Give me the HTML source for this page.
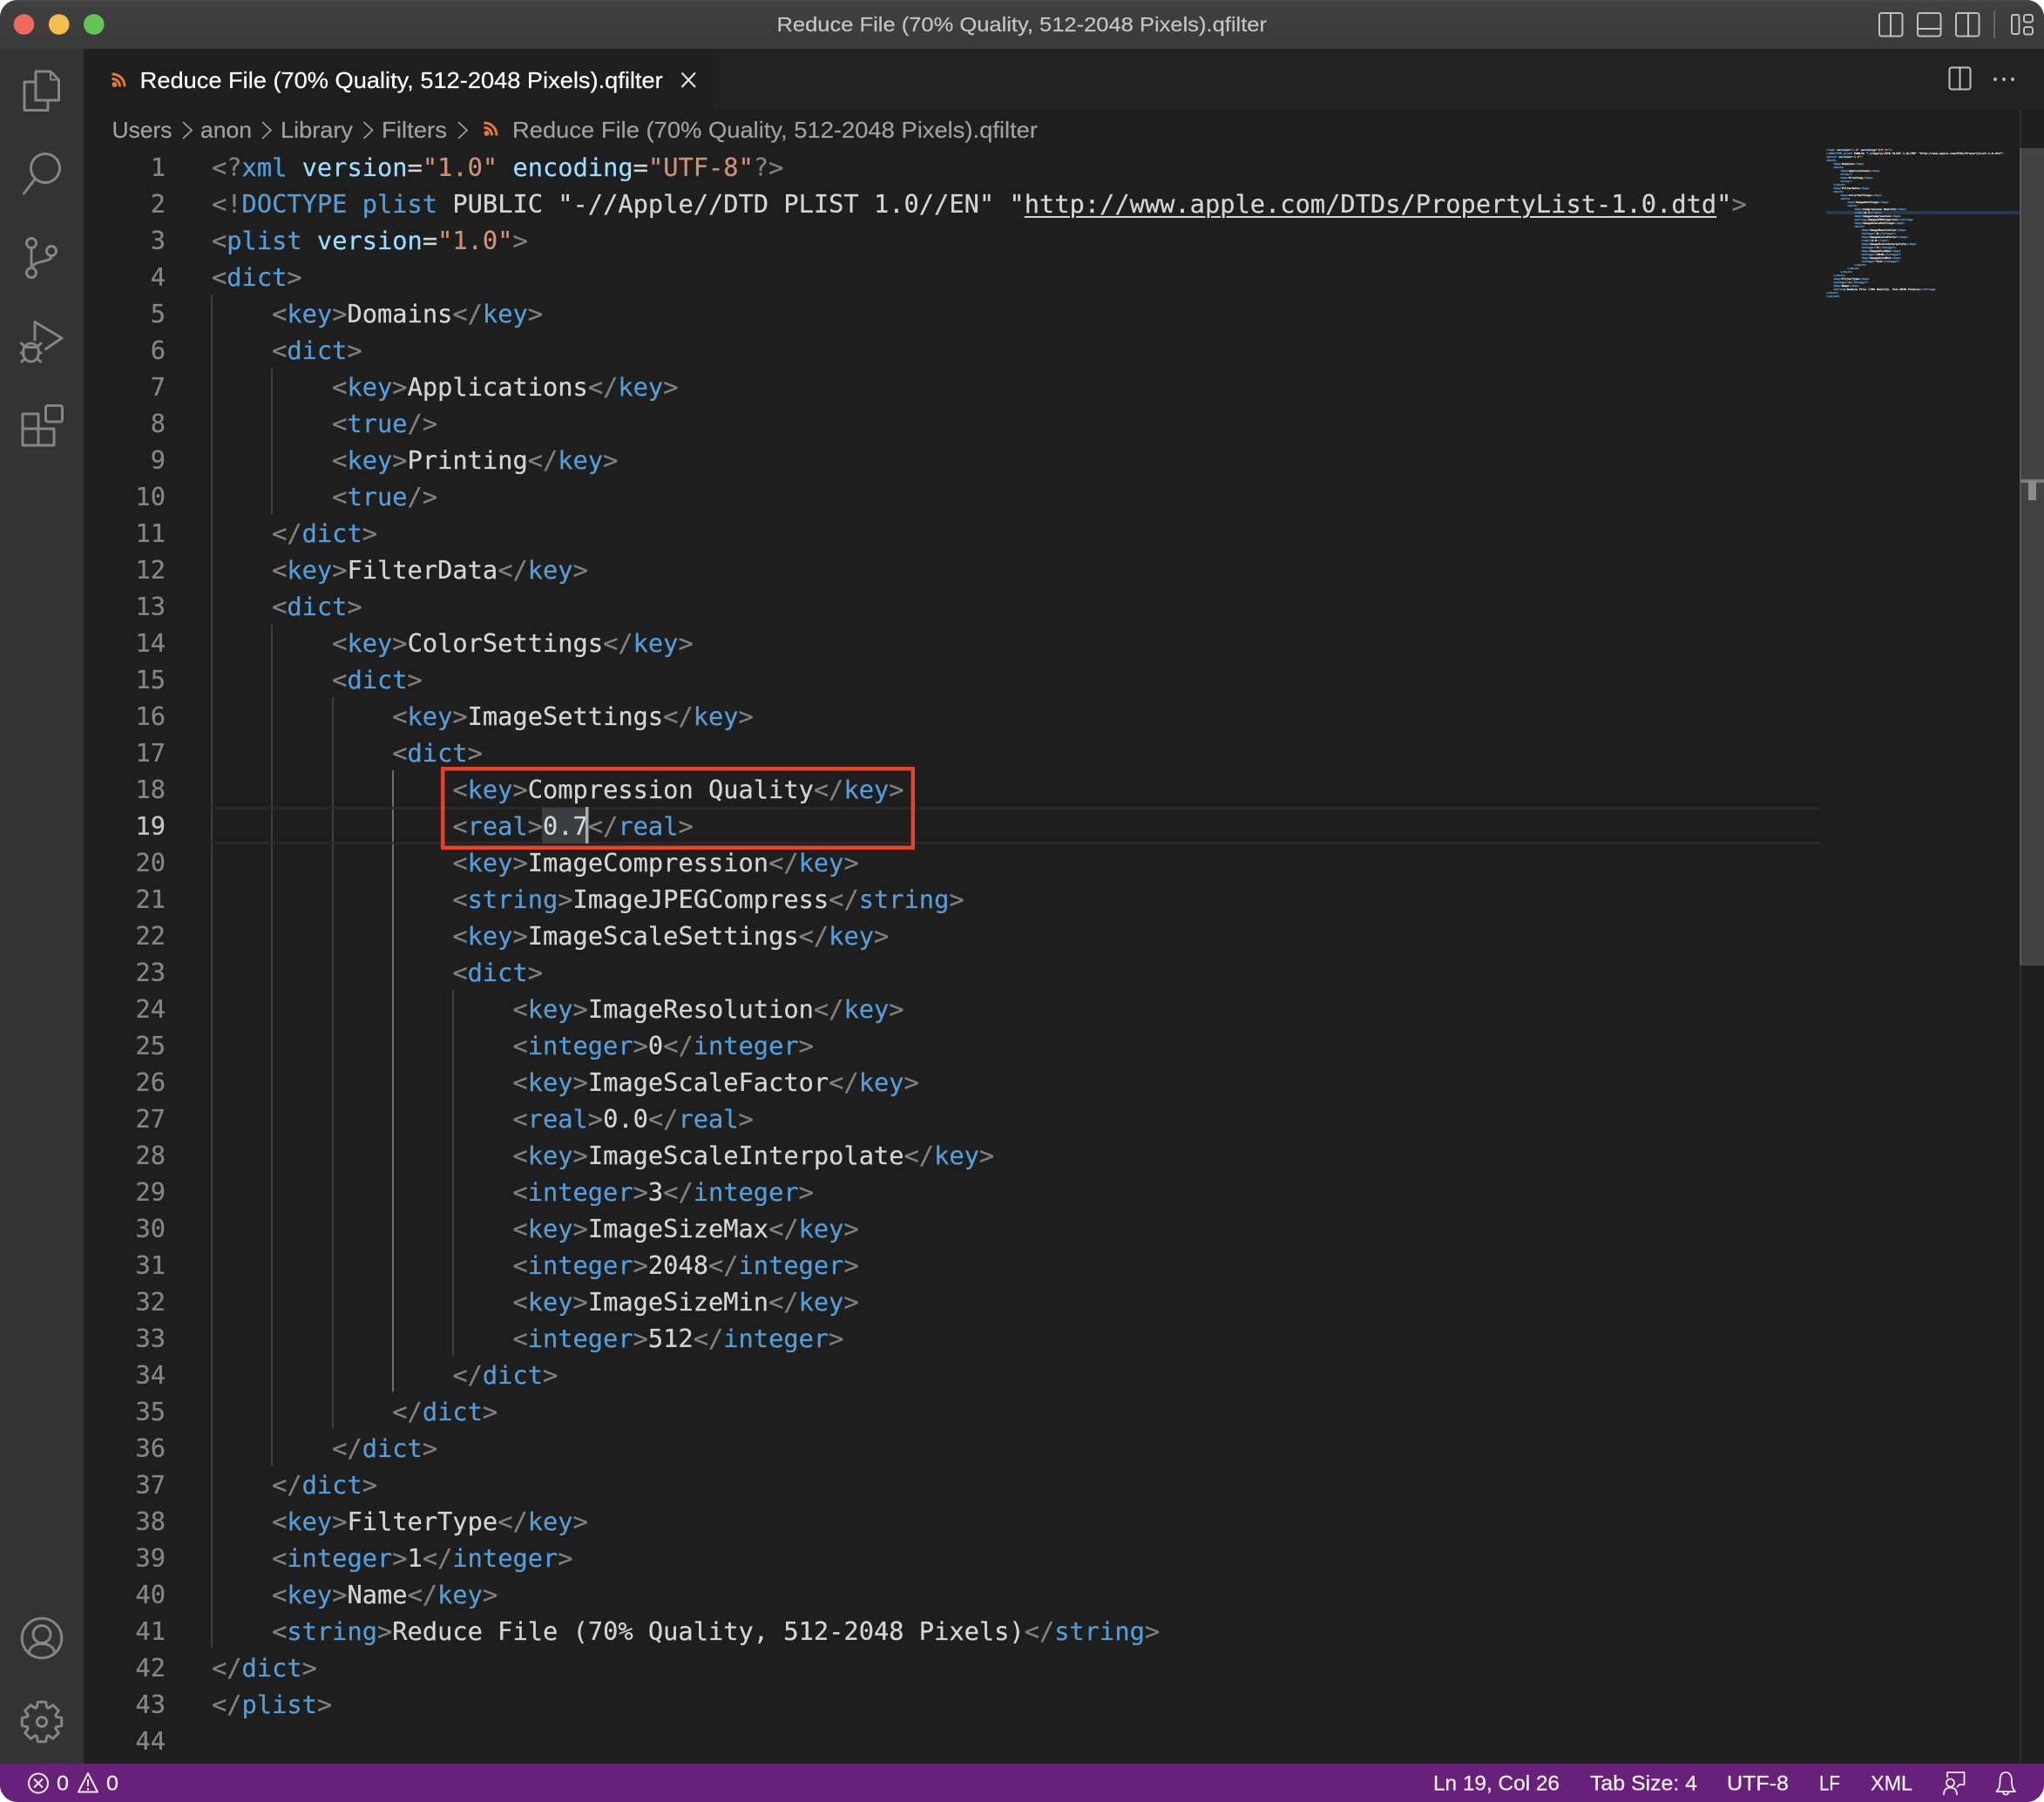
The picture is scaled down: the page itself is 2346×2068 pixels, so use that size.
<!DOCTYPE html>
<html lang="en"><head><meta charset="utf-8"><title>Reduce File</title>
<style>
html,body{margin:0;padding:0;background:#fff}
#w{position:relative;width:2346px;height:2068px;overflow:hidden;background:#1e1e1e;border-radius:20px}
.a{position:absolute}
svg{position:absolute;left:0;top:0}
pre{margin:0;position:absolute;font-family:"DejaVu Sans Mono","Liberation Mono",monospace;font-size:28.7px;line-height:42px;color:#808080;-webkit-font-smoothing:antialiased;-webkit-text-stroke:.25px currentColor}
pre b{color:#569cd6;font-weight:normal}
pre i{color:#d4d4d4;font-style:normal}
pre em{color:#9cdcfe;font-style:normal}
pre s{color:#ce9178;text-decoration:none}
pre u{color:#d4d4d4;text-decoration-thickness:2px;text-underline-offset:4px}
#nums{left:130px;width:60px;top:170.8px;text-align:right;color:#858585}
#nums span{color:#c6c6c6}
#code{left:243px;top:170.8px}
#mini{left:2096px;top:170px;transform-origin:0 0;transform:scale(.11574,.0952);-webkit-text-stroke:3.5px currentColor}
text{font-family:"Liberation Sans",sans-serif}
</style></head><body>
<div id="w">
<div class="a" style="left:0;top:0;width:2346px;height:56px;background:linear-gradient(#4a4a4a 0,#404040 3px,#3a3a3a 56px)"></div>
<div class="a" style="left:96px;top:56px;width:2250px;height:70px;background:#222222"></div>
<div class="a" style="left:96px;top:56px;width:722px;height:70px;background:#1e1e1e"></div>
<div class="a" style="left:0;top:56px;width:96px;height:1968px;background:#333333"></div>
<div class="a" style="left:0;top:2024px;width:2346px;height:44px;background:#68217a"></div>

<svg width="2346" height="2068" viewBox="0 0 2346 2068">
<g fill="#3e3e3e">
<rect x="242" y="338.6" width="2" height="1552.6"/>
<rect x="311" y="422.6" width="2" height="167.8"/>
<rect x="311" y="716.3" width="2" height="965.1"/>
<rect x="381" y="800.2" width="2" height="839.2"/>
<rect x="519" y="1135.9" width="2" height="419.6"/>
</g>
<rect x="450" y="884.1" width="2" height="713.3" fill="#6e6e6e"/>
<rect x="243" y="926" width="1845" height="2.5" fill="#292929"/>
<rect x="243" y="966" width="1845" height="2.5" fill="#292929"/>
<rect x="622" y="926.5" width="53" height="41.5" fill="#3a3d41"/>
<rect x="2096" y="242" width="222" height="4" fill="#26374f"/>
</svg>

<pre id="nums">1
2
3
4
5
6
7
8
9
10
11
12
13
14
15
16
17
18
<span>19</span>
20
21
22
23
24
25
26
27
28
29
30
31
32
33
34
35
36
37
38
39
40
41
42
43
44</pre>

<pre id="code">&lt;?<b>xml</b> <em>version</em><i>=</i><s>"1.0"</s> <em>encoding</em><i>=</i><s>"UTF-8"</s>?&gt;
&lt;!<b>DOCTYPE</b> <b>plist</b> <i>PUBLIC "-//Apple//DTD PLIST 1.0//EN" "<u>http://www.apple.com/DTDs/PropertyList-1.0.dtd</u>"</i>&gt;
&lt;<b>plist</b> <em>version</em><i>=</i><s>"1.0"</s>&gt;
&lt;<b>dict</b>&gt;
    &lt;<b>key</b>&gt;<i>Domains</i>&lt;/<b>key</b>&gt;
    &lt;<b>dict</b>&gt;
        &lt;<b>key</b>&gt;<i>Applications</i>&lt;/<b>key</b>&gt;
        &lt;<b>true</b>/&gt;
        &lt;<b>key</b>&gt;<i>Printing</i>&lt;/<b>key</b>&gt;
        &lt;<b>true</b>/&gt;
    &lt;/<b>dict</b>&gt;
    &lt;<b>key</b>&gt;<i>FilterData</i>&lt;/<b>key</b>&gt;
    &lt;<b>dict</b>&gt;
        &lt;<b>key</b>&gt;<i>ColorSettings</i>&lt;/<b>key</b>&gt;
        &lt;<b>dict</b>&gt;
            &lt;<b>key</b>&gt;<i>ImageSettings</i>&lt;/<b>key</b>&gt;
            &lt;<b>dict</b>&gt;
                &lt;<b>key</b>&gt;<i>Compression Quality</i>&lt;/<b>key</b>&gt;
                &lt;<b>real</b>&gt;<i>0.7</i>&lt;/<b>real</b>&gt;
                &lt;<b>key</b>&gt;<i>ImageCompression</i>&lt;/<b>key</b>&gt;
                &lt;<b>string</b>&gt;<i>ImageJPEGCompress</i>&lt;/<b>string</b>&gt;
                &lt;<b>key</b>&gt;<i>ImageScaleSettings</i>&lt;/<b>key</b>&gt;
                &lt;<b>dict</b>&gt;
                    &lt;<b>key</b>&gt;<i>ImageResolution</i>&lt;/<b>key</b>&gt;
                    &lt;<b>integer</b>&gt;<i>0</i>&lt;/<b>integer</b>&gt;
                    &lt;<b>key</b>&gt;<i>ImageScaleFactor</i>&lt;/<b>key</b>&gt;
                    &lt;<b>real</b>&gt;<i>0.0</i>&lt;/<b>real</b>&gt;
                    &lt;<b>key</b>&gt;<i>ImageScaleInterpolate</i>&lt;/<b>key</b>&gt;
                    &lt;<b>integer</b>&gt;<i>3</i>&lt;/<b>integer</b>&gt;
                    &lt;<b>key</b>&gt;<i>ImageSizeMax</i>&lt;/<b>key</b>&gt;
                    &lt;<b>integer</b>&gt;<i>2048</i>&lt;/<b>integer</b>&gt;
                    &lt;<b>key</b>&gt;<i>ImageSizeMin</i>&lt;/<b>key</b>&gt;
                    &lt;<b>integer</b>&gt;<i>512</i>&lt;/<b>integer</b>&gt;
                &lt;/<b>dict</b>&gt;
            &lt;/<b>dict</b>&gt;
        &lt;/<b>dict</b>&gt;
    &lt;/<b>dict</b>&gt;
    &lt;<b>key</b>&gt;<i>FilterType</i>&lt;/<b>key</b>&gt;
    &lt;<b>integer</b>&gt;<i>1</i>&lt;/<b>integer</b>&gt;
    &lt;<b>key</b>&gt;<i>Name</i>&lt;/<b>key</b>&gt;
    &lt;<b>string</b>&gt;<i>Reduce File (70% Quality, 512-2048 Pixels)</i>&lt;/<b>string</b>&gt;
&lt;/<b>dict</b>&gt;
&lt;/<b>plist</b>&gt;
</pre>

<pre id="mini" aria-hidden="true">&lt;?<b>xml</b> <em>version</em><i>=</i><s>"1.0"</s> <em>encoding</em><i>=</i><s>"UTF-8"</s>?&gt;
&lt;!<b>DOCTYPE</b> <b>plist</b> <i>PUBLIC "-//Apple//DTD PLIST 1.0//EN" "http://www.apple.com/DTDs/PropertyList-1.0.dtd"</i>&gt;
&lt;<b>plist</b> <em>version</em><i>=</i><s>"1.0"</s>&gt;
&lt;<b>dict</b>&gt;
    &lt;<b>key</b>&gt;<i>Domains</i>&lt;/<b>key</b>&gt;
    &lt;<b>dict</b>&gt;
        &lt;<b>key</b>&gt;<i>Applications</i>&lt;/<b>key</b>&gt;
        &lt;<b>true</b>/&gt;
        &lt;<b>key</b>&gt;<i>Printing</i>&lt;/<b>key</b>&gt;
        &lt;<b>true</b>/&gt;
    &lt;/<b>dict</b>&gt;
    &lt;<b>key</b>&gt;<i>FilterData</i>&lt;/<b>key</b>&gt;
    &lt;<b>dict</b>&gt;
        &lt;<b>key</b>&gt;<i>ColorSettings</i>&lt;/<b>key</b>&gt;
        &lt;<b>dict</b>&gt;
            &lt;<b>key</b>&gt;<i>ImageSettings</i>&lt;/<b>key</b>&gt;
            &lt;<b>dict</b>&gt;
                &lt;<b>key</b>&gt;<i>Compression Quality</i>&lt;/<b>key</b>&gt;
                &lt;<b>real</b>&gt;<i>0.7</i>&lt;/<b>real</b>&gt;
                &lt;<b>key</b>&gt;<i>ImageCompression</i>&lt;/<b>key</b>&gt;
                &lt;<b>string</b>&gt;<i>ImageJPEGCompress</i>&lt;/<b>string</b>&gt;
                &lt;<b>key</b>&gt;<i>ImageScaleSettings</i>&lt;/<b>key</b>&gt;
                &lt;<b>dict</b>&gt;
                    &lt;<b>key</b>&gt;<i>ImageResolution</i>&lt;/<b>key</b>&gt;
                    &lt;<b>integer</b>&gt;<i>0</i>&lt;/<b>integer</b>&gt;
                    &lt;<b>key</b>&gt;<i>ImageScaleFactor</i>&lt;/<b>key</b>&gt;
                    &lt;<b>real</b>&gt;<i>0.0</i>&lt;/<b>real</b>&gt;
                    &lt;<b>key</b>&gt;<i>ImageScaleInterpolate</i>&lt;/<b>key</b>&gt;
                    &lt;<b>integer</b>&gt;<i>3</i>&lt;/<b>integer</b>&gt;
                    &lt;<b>key</b>&gt;<i>ImageSizeMax</i>&lt;/<b>key</b>&gt;
                    &lt;<b>integer</b>&gt;<i>2048</i>&lt;/<b>integer</b>&gt;
                    &lt;<b>key</b>&gt;<i>ImageSizeMin</i>&lt;/<b>key</b>&gt;
                    &lt;<b>integer</b>&gt;<i>512</i>&lt;/<b>integer</b>&gt;
                &lt;/<b>dict</b>&gt;
            &lt;/<b>dict</b>&gt;
        &lt;/<b>dict</b>&gt;
    &lt;/<b>dict</b>&gt;
    &lt;<b>key</b>&gt;<i>FilterType</i>&lt;/<b>key</b>&gt;
    &lt;<b>integer</b>&gt;<i>1</i>&lt;/<b>integer</b>&gt;
    &lt;<b>key</b>&gt;<i>Name</i>&lt;/<b>key</b>&gt;
    &lt;<b>string</b>&gt;<i>Reduce File (70% Quality, 512-2048 Pixels)</i>&lt;/<b>string</b>&gt;
&lt;/<b>dict</b>&gt;
&lt;/<b>plist</b>&gt;</pre>

<svg width="2346" height="2068" viewBox="0 0 2346 2068">
<!-- scrollbar -->
<rect x="2318" y="170" width="28" height="938" fill="#434343"/>
<rect x="2318" y="126" width="2" height="1898" fill="#2c2c2c"/>
<rect x="2318" y="170" width="2" height="938" fill="#565656"/>
<rect x="2319" y="550" width="27" height="4" fill="#7a7a7a"/>
<rect x="2328" y="552" width="9" height="22" fill="#8c8c8c"/>

<!-- cursor + highlight box -->
<rect x="672" y="926" width="3.5" height="42" fill="#aeafad"/>
<rect x="508.2" y="882.2" width="539.6" height="90.6" fill="none" stroke="#e2432a" stroke-width="4.5"/>

<!-- traffic lights -->
<circle cx="27.5" cy="28" r="11.8" fill="#ee6a5f"/>
<circle cx="67.7" cy="28" r="11.8" fill="#f5bd4f"/>
<circle cx="107.8" cy="28" r="11.8" fill="#61c454"/>

<!-- title -->
<text x="891.5" y="36" font-size="23.5" fill="#c4c4c4" stroke="#c4c4c4" stroke-width=".2" textLength="562.5" lengthAdjust="spacingAndGlyphs">Reduce File (70% Quality, 512-2048 Pixels).qfilter</text>

<!-- title icons -->
<g fill="none" stroke="#c0c0c0" stroke-width="2">
<rect x="2157" y="15" width="26.5" height="26.5" rx="2.5"/><path d="M2170 15v26.5"/>
<rect x="2201" y="15" width="26.5" height="26.5" rx="2.5"/><path d="M2201 33h26.5"/>
<rect x="2245" y="15" width="26.5" height="26.5" rx="2.5"/><path d="M2259 15v26.5"/>
<path d="M2289 12v32" stroke="#666"/>
<rect x="2309" y="17" width="8.5" height="22" rx="2"/>
<rect x="2323" y="17" width="10" height="8.5" rx="2.5"/>
<rect x="2323" y="31" width="10" height="8.5" rx="2.5"/>
<rect x="2237.5" y="77.5" width="24" height="25" rx="2.5"/><path d="M2249.500 77.500v25"/>
</g>
<g fill="#b8b8b8"><circle cx="2290" cy="91" r="2"/><circle cx="2300" cy="91" r="2"/><circle cx="2310" cy="91" r="2"/></g>

<!-- tab -->
<g fill="none" stroke="#e37933">
<path d="M128.500 85C137 85 143 91 143 99.500" stroke-width="3"/>
<path d="M128.500 90.500C134 90.500 137.500 94 137.500 99.500" stroke-width="3"/>
</g><circle cx="131.500" cy="97" r="3" fill="#e37933"/>
<text x="160.700" y="100.800" font-size="26" fill="#ffffff" stroke="#ffffff" stroke-width=".25" textLength="600" lengthAdjust="spacingAndGlyphs">Reduce File (70% Quality, 512-2048 Pixels).qfilter</text>
<path d="M782.500 83.500L798 100M798 83.500L782.500 100" stroke="#e4e4e4" stroke-width="2.200" fill="none"/>

<!-- breadcrumbs -->
<g font-size="26" fill="#a0a0a0" stroke="#a0a0a0" stroke-width=".2">
<text x="128.500" y="158" textLength="69" lengthAdjust="spacingAndGlyphs">Users</text>
<text x="230" y="158" textLength="59" lengthAdjust="spacingAndGlyphs">anon</text>
<text x="322" y="158" textLength="83" lengthAdjust="spacingAndGlyphs">Library</text>
<text x="438" y="158" textLength="75" lengthAdjust="spacingAndGlyphs">Filters</text>
<text x="588" y="158" textLength="603" lengthAdjust="spacingAndGlyphs">Reduce File (70% Quality, 512-2048 Pixels).qfilter</text>
</g>
<g fill="none" stroke="#9a9a9a" stroke-width="1.800">
<path d="M210 140l10 9.500-10 9.500M301 140l10 9.500-10 9.500M417.500 140l10 9.500-10 9.500M526 140l10 9.500-10 9.500"/>
</g>
<g fill="none" stroke="#e37933">
<path d="M555.500 141C564 141 570 147 570 155.500" stroke-width="3"/>
<path d="M555.500 146.500C561 146.500 564.500 150 564.500 155.500" stroke-width="3"/>
</g><circle cx="558.500" cy="153" r="3" fill="#e37933"/>

<!-- activity icons -->
<g fill="none" stroke="#858585" stroke-width="3" stroke-linejoin="round" stroke-linecap="round">
<path d="M41 82H58L67.500 91.500V115H41Z"/>
<path d="M58 82V91.500H67.500" stroke-width="2"/>
<path d="M41 94H28V126.500H55V115"/>
<circle cx="52" cy="193" r="16.500"/>
<path d="M40.500 205L27.500 222"/>
<circle cx="36" cy="279" r="5.500"/>
<circle cx="36" cy="313" r="5.500"/>
<circle cx="59" cy="288" r="5.500"/>
<path d="M36 285V307M59 294C59 302 38 298 37 307.500"/>
<path d="M40 390V369.500L71 388L52.500 400.500"/>
<ellipse cx="35.500" cy="404.500" rx="9" ry="10.500"/>
<path d="M27.500 398.500H43.500M24.500 394L28.500 397.500M47 394L43 397.500M24.500 405H27M44 405H47M25 415L29 411.500M46.500 415L42.500 411.500"/>
<path d="M26 475H44V492H62V511H26ZM26 492H44V511"/>
<rect x="52.500" y="465.500" width="19" height="18.500" rx="2.500"/>
<circle cx="48" cy="1880" r="22.800"/>
<circle cx="48" cy="1875.500" r="10"/>
<path d="M33 1897.500C34 1890 40 1886.500 48 1886.500S62 1890 63 1897.500"/>
<circle cx="48" cy="1976" r="5.500"/>
<g transform="translate(48 1976)">
<path d="M-5.840-16.500L-4.600-22.700H4.600L5.840-16.500A17.500 17.500 0 0 1 7.530-15.800"/>
<path transform="rotate(45)" d="M-5.840-16.500L-4.600-22.700H4.600L5.840-16.500A17.500 17.500 0 0 1 7.530-15.800"/>
<path transform="rotate(90)" d="M-5.840-16.500L-4.600-22.700H4.600L5.840-16.500A17.500 17.500 0 0 1 7.530-15.800"/>
<path transform="rotate(135)" d="M-5.840-16.500L-4.600-22.700H4.600L5.840-16.500A17.500 17.500 0 0 1 7.530-15.800"/>
<path transform="rotate(180)" d="M-5.840-16.500L-4.600-22.700H4.600L5.840-16.500A17.500 17.500 0 0 1 7.530-15.800"/>
<path transform="rotate(225)" d="M-5.840-16.500L-4.600-22.700H4.600L5.840-16.500A17.500 17.500 0 0 1 7.530-15.800"/>
<path transform="rotate(270)" d="M-5.840-16.500L-4.600-22.700H4.600L5.840-16.500A17.500 17.500 0 0 1 7.530-15.800"/>
<path transform="rotate(315)" d="M-5.840-16.500L-4.600-22.700H4.600L5.840-16.500A17.500 17.500 0 0 1 7.530-15.800"/>
</g>
</g>

<!-- status left -->
<g fill="none" stroke="#f4edf6" stroke-width="2">
<circle cx="44" cy="2046.500" r="11"/><path d="M39 2041.500l10 10M49 2041.500l-10 10"/>
<path d="M101 2035L112 2056.500H90Z" stroke-linejoin="round"/><path d="M101 2042v8M101 2052v2.500"/>
</g>
<g font-size="24" fill="#f8f2fa" stroke="#f8f2fa" stroke-width=".25">
<text x="65" y="2054.500" textLength="14" lengthAdjust="spacingAndGlyphs">0</text>
<text x="122" y="2054.500" textLength="14" lengthAdjust="spacingAndGlyphs">0</text>
<text x="1645" y="2054.500" textLength="145" lengthAdjust="spacingAndGlyphs">Ln 19, Col 26</text>
<text x="1825" y="2054.500" textLength="123" lengthAdjust="spacingAndGlyphs">Tab Size: 4</text>
<text x="1982" y="2054.500" textLength="71" lengthAdjust="spacingAndGlyphs">UTF-8</text>
<text x="2088" y="2054.500" textLength="24" lengthAdjust="spacingAndGlyphs">LF</text>
<text x="2147" y="2054.500" textLength="48" lengthAdjust="spacingAndGlyphs">XML</text>
</g>
<g fill="none" stroke="#f4edf6" stroke-width="1.800" stroke-linejoin="round">
<path d="M2235 2040V2034H2254.500V2048H2249L2246 2051"/>
<circle cx="2238.500" cy="2046" r="4.500"/>
<path d="M2231 2060C2231 2054 2234 2051.500 2238.500 2051.500S2246 2054 2246 2060"/>
<path d="M2291.500 2056H2313C2310 2053 2309 2050 2309 2044C2309 2037 2306 2034 2302 2034S2295.500 2037 2295.500 2044C2295.500 2050 2294.500 2053 2291.500 2056Z"/>
<path d="M2299 2056.500C2299 2060.500 2305.500 2060.500 2305.500 2056.500"/>
</g>
</svg>
</div>
</body></html>
